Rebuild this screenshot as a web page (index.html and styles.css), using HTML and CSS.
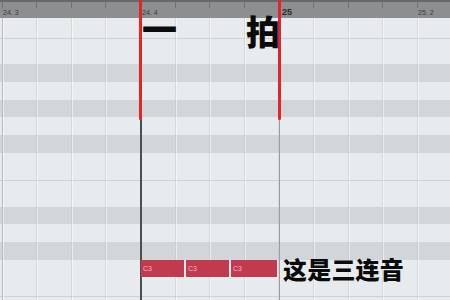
FILE: index.html
```
<!DOCTYPE html>
<html>
<head>
<meta charset="utf-8">
<link rel="stylesheet" href="styles.css">
</head>
<body>
<div class="editor">
  <div class="ruler">
    <span class="lbl l1">24. 3</span>
    <span class="lbl l2">24. 4</span>
    <span class="lbl l3 bar">25</span>
    <span class="lbl l4">25. 2</span>
  </div>
  <div class="rows">
    <div class="row w h20"></div>
    <div class="row w h26 line"></div>
    <div class="row b h18"></div>
    <div class="row w h18"></div>
    <div class="row b h17"></div>
    <div class="row w h18"></div>
    <div class="row b h18"></div>
    <div class="row w h27"></div>
    <div class="row w h27 line"></div>
    <div class="row b h17"></div>
    <div class="row w h18"></div>
    <div class="row b h18"></div>
    <div class="row w h36"></div>
    <div class="row w h18 line"></div>
  </div>
  <div class="grid"></div>
  <div class="vline beat" style="left:2px"></div>
  <div class="vline bar-line" style="left:279px"></div>
  <div class="vline cursor" style="left:140px"></div>
  <div class="marker" style="left:139px"></div>
  <div class="marker" style="left:278px"></div>
  <div class="note" style="left:141px;width:43px">C3</div>
  <div class="note" style="left:186px;width:43px">C3</div>
  <div class="note" style="left:231px;width:46px">C3</div>
  <div class="anno one">一</div>
  <div class="anno pai">拍</div>
  <div class="anno triplet">这是三连音</div>
</div>
</body>
</html>
```
FILE: styles.css
```
html, body {
  margin: 0;
  padding: 0;
  background: #e8ebee;
}
.editor {
  position: relative;
  width: 450px;
  height: 300px;
  overflow: hidden;
  font-family: "Liberation Sans", Arial, sans-serif;
}
.ruler {
  height: 18px;
  box-sizing: border-box;
  border-top: 2px solid #66686a;
  background-color: #8c8e90;
  background-image: repeating-linear-gradient(to right, transparent 0, transparent 1.6px, #6f7173 1.6px, #6f7173 2.6px, transparent 2.6px, transparent 34.6px);
  background-size: 100% 6px;
  background-repeat: no-repeat;
  position: relative;
}
.lbl {
  position: absolute;
  top: 7px;
  font-size: 7px;
  line-height: 8px;
  color: #3a3b3c;
}
.l1 { left: 3px; }
.l2 { left: 142px; }
.l3 { left: 282px; font-size: 9px; font-weight: bold; color: #2a2a2a; top: 6px; }
.l4 { left: 418px; }
.rows {
  display: flex;
  flex-direction: column;
}
.row { flex: none; box-sizing: border-box; }
.w { background: #e8ebee; }
.b { background: #d3d6d9; }
.line { border-top: 1px solid #cdd1d4; }
.h17 { height: 17px; }
.h18 { height: 18px; }
.h20 { height: 20px; }
.h26 { height: 26px; }
.h27 { height: 27px; }
.h36 { height: 36px; }
.grid {
  position: absolute;
  left: 0;
  top: 18px;
  right: 0;
  bottom: 0;
  background-image: repeating-linear-gradient(to right, transparent 0, transparent 1.6px, rgba(190,196,200,0.45) 1.6px, rgba(190,196,200,0.45) 2.6px, rgba(255,255,255,0.5) 2.6px, rgba(255,255,255,0.5) 3.6px, transparent 3.6px, transparent 34.6px);
}
.vline {
  position: absolute;
  top: 18px;
  bottom: 0;
  width: 1px;
}
.beat { background: #b9bdc1; }
.bar-line { background: #9a9ea2; }
.cursor { background: #4c4e50; width: 2px; left: 140px; }
.marker {
  position: absolute;
  top: 0;
  height: 120px;
  width: 3px;
  background: #e3242d;
  border-radius: 0 0 1.5px 1.5px;
}
.note {
  position: absolute;
  top: 260px;
  height: 17px;
  box-sizing: border-box;
  background: #c13a50;
  color: #f0b8c2;
  font-size: 7px;
  line-height: 17px;
  padding-left: 2px;
}
.anno {
  position: absolute;
  font-family: "Noto Sans CJK SC", "Noto Sans", sans-serif;
  font-weight: 900;
  color: #0b0b0b;
  white-space: nowrap;
}
.one { left: 142px; top: 18px; font-size: 35px; line-height: 20px; }
.pai { left: 246px; top: 9px; font-size: 34px; line-height: 44px; }
.triplet { left: 283px; top: 252px; font-size: 24px; line-height: 34px; letter-spacing: 0.2px; }
```
